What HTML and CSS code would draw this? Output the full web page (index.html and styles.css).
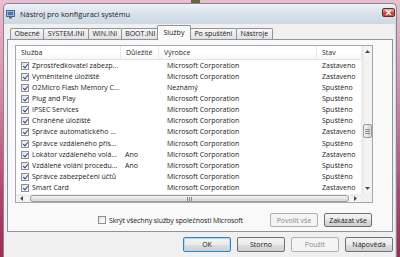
FILE: index.html
```html
<!DOCTYPE html>
<html lang="cs">
<head>
<meta charset="utf-8">
<title>Nástroj pro konfiguraci systému</title>
<link rel="stylesheet" href="styles.css">
</head>
<body>
<div class="desk-blob"></div>
<div class="window">
  <div class="titlebar">
    <svg class="app-icon" viewBox="0 0 9 9" width="9" height="9">
      <rect x="0.5" y="0.5" width="8" height="6" fill="#e4eaf1" stroke="#56677c"/>
      <rect x="1.5" y="1.5" width="6" height="4" fill="#3f78c6"/>
      <rect x="3" y="7" width="3" height="1.5" fill="#56677c"/>
    </svg>
    <span class="title">Nástroj pro konfiguraci systému</span>
    <div class="close">
      <svg viewBox="0 0 13 9" width="13" height="9"><path d="M4.5 2.5 L8.5 6.5 M8.5 2.5 L4.5 6.5" stroke="#ffffff" stroke-width="1.4" stroke-linecap="round"/></svg>
    </div>
  </div>
  <div class="client">
    <div class="tabs">
      <div class="tab">Obecné</div>
      <div class="tab">SYSTEM.INI</div>
      <div class="tab">WIN.INI</div>
      <div class="tab">BOOT.INI</div>
      <div class="tab selected">Služby</div>
      <div class="tab">Po spuštění</div>
      <div class="tab">Nástroje</div>
    </div>
    <div class="panel">
      <div class="listview">
        <div class="lv-content">
          <div class="lv-header">
            <div class="hcol c1">Služba</div>
            <div class="hcol c2">Důležité</div>
            <div class="hcol c3">Výrobce</div>
            <div class="hcol c4">Stav</div>
          </div>
          <div class="lv-row"><div class="cell c1"><span class="cb"></span>Zprostředkovatel zabezp...</div><div class="cell c2"></div><div class="cell c3">Microsoft Corporation</div><div class="cell c4">Zastaveno</div></div>
          <div class="lv-row"><div class="cell c1"><span class="cb"></span>Vyměnitelné úložiště</div><div class="cell c2"></div><div class="cell c3">Microsoft Corporation</div><div class="cell c4">Zastaveno</div></div>
          <div class="lv-row"><div class="cell c1"><span class="cb"></span>O2Micro Flash Memory C...</div><div class="cell c2"></div><div class="cell c3">Neznámý</div><div class="cell c4">Spuštěno</div></div>
          <div class="lv-row"><div class="cell c1"><span class="cb"></span>Plug and Play</div><div class="cell c2"></div><div class="cell c3">Microsoft Corporation</div><div class="cell c4">Spuštěno</div></div>
          <div class="lv-row"><div class="cell c1"><span class="cb"></span>IPSEC Services</div><div class="cell c2"></div><div class="cell c3">Microsoft Corporation</div><div class="cell c4">Spuštěno</div></div>
          <div class="lv-row"><div class="cell c1"><span class="cb"></span>Chráněné úložiště</div><div class="cell c2"></div><div class="cell c3">Microsoft Corporation</div><div class="cell c4">Spuštěno</div></div>
          <div class="lv-row"><div class="cell c1"><span class="cb"></span>Správce automatického ...</div><div class="cell c2"></div><div class="cell c3">Microsoft Corporation</div><div class="cell c4">Zastaveno</div></div>
          <div class="lv-row"><div class="cell c1"><span class="cb"></span>Správce vzdáleného přís...</div><div class="cell c2"></div><div class="cell c3">Microsoft Corporation</div><div class="cell c4">Spuštěno</div></div>
          <div class="lv-row"><div class="cell c1"><span class="cb"></span>Lokátor vzdáleného volá...</div><div class="cell c2">Ano</div><div class="cell c3">Microsoft Corporation</div><div class="cell c4">Zastaveno</div></div>
          <div class="lv-row"><div class="cell c1"><span class="cb"></span>Vzdálené volání procedu...</div><div class="cell c2">Ano</div><div class="cell c3">Microsoft Corporation</div><div class="cell c4">Spuštěno</div></div>
          <div class="lv-row"><div class="cell c1"><span class="cb"></span>Správce zabezpečení účtů</div><div class="cell c2"></div><div class="cell c3">Microsoft Corporation</div><div class="cell c4">Spuštěno</div></div>
          <div class="lv-row"><div class="cell c1"><span class="cb"></span>Smart Card</div><div class="cell c2"></div><div class="cell c3">Microsoft Corporation</div><div class="cell c4">Zastaveno</div></div>
        </div>
        <div class="vscroll">
          <div class="sb-btn">
            <svg viewBox="0 0 5 3" width="5" height="3"><polygon points="2.5,0 5,3 0,3" fill="#4a4a4a"/></svg>
          </div>
          <div class="v-track">
            <div class="v-thumb"><span class="grip-h"></span></div>
          </div>
          <div class="sb-btn">
            <svg viewBox="0 0 5 3" width="5" height="3"><polygon points="0,0 5,0 2.5,3" fill="#4a4a4a"/></svg>
          </div>
        </div>
        <div class="hscroll">
          <div class="sb-btn h">
            <svg viewBox="0 0 3 5" width="3" height="5"><polygon points="3,0 3,5 0,2.5" fill="#4a4a4a"/></svg>
          </div>
          <div class="h-thumb"><span class="grip-v"></span></div>
          <div class="sb-btn h">
            <svg viewBox="0 0 3 5" width="3" height="5"><polygon points="0,0 3,2.5 0,5" fill="#4a4a4a"/></svg>
          </div>
        </div>
        <div class="corner"></div>
      </div>
      <div class="panel-actions">
        <label class="hide-ms"><span class="box"></span>Skrýt všechny služby společnosti Microsoft</label>
        <button class="btn" disabled>Povolit vše</button>
        <button class="btn">Zakázat vše</button>
      </div>
    </div>
    <div class="dialog-buttons">
      <button class="btn big default">OK</button>
      <button class="btn big">Storno</button>
      <button class="btn big" disabled>Použít</button>
      <button class="btn big">Nápověda</button>
    </div>
  </div>
</div>
</body>
</html>
```

FILE: styles.css
```css
* { box-sizing: border-box; }
html, body { margin: 0; padding: 0; }
body {
  width: 400px;
  height: 257px;
  overflow: hidden;
  position: relative;
  background: linear-gradient(180deg, #e9c0cd 0%, #d88aa4 35%, #b7446a 75%, #a3294e 100%);
  font-family: "Open Sans", "Noto Sans", sans-serif;
  font-size: 7px;
  color: #1a1a1a;
}
.desk-blob {
  position: absolute;
  left: 191px;
  top: 0;
  width: 9px;
  height: 3px;
  background: #6b6434;
}
.window {
  margin: 3px 0 0 3px;
  width: 394px;
  height: 258px;
  border: 1px solid #7a8a9c;
  border-bottom: none;
  border-radius: 5px 5px 0 0;
  background: linear-gradient(180deg, #edf2f7 0%, #d9e3ec 9px, #cdd8e3 20px, #cfd9e3 100%);
  display: flex;
  flex-direction: column;
}
.titlebar {
  height: 20px;
  flex: none;
  display: flex;
  align-items: center;
  padding: 0 1px 0 2px;
}
.app-icon { flex: none; margin-right: 5px; }
.title {
  flex: 1;
  font-size: 7.4px;
  color: #202020;
}
.close {
  flex: none;
  align-self: flex-start;
  margin-top: 4px;
  width: 13px;
  height: 9px;
  border: 1px solid #6e2a22;
  border-radius: 2px;
  background: linear-gradient(180deg, #e9a99c 0%, #d66b58 45%, #c23f2a 55%, #c9573f 100%);
  display: flex;
}
.close svg { margin: -1px; }

.client {
  flex: 1;
  margin-right: 1px;
  background: #f0f0f0;
  padding: 1px 2px 0 3px;
  display: flex;
  flex-direction: column;
}
.tabs {
  height: 14px;
  display: flex;
  align-items: flex-end;
  padding-left: 3px;
}
.tab {
  height: 11px;
  padding: 0 3.5px;
  border: 1px solid #8e929a;
  border-bottom: none;
  margin-right: -1px;
  border-radius: 2px 2px 0 0;
  background: linear-gradient(180deg, #f7f7f7 0%, #ececec 50%, #e1e1e1 100%);
  line-height: 10px;
  white-space: nowrap;
}
.tab.selected {
  height: 15px;
  margin: 0 -1px -1px -2px;
  padding: 0 5.5px;
  background: #fbfbfb;
  line-height: 13px;
  position: relative;
  z-index: 1;
}
.panel {
  border: 1px solid #8e929a;
  background: #f9f9f9;
  padding: 5px 19px 4px 7px;
  display: flex;
  flex-direction: column;
}
.listview {
  width: 358px;
  height: 158px;
  border: 1px solid #a3a7ae;
  background: #ffffff;
  display: grid;
  grid-template-columns: 345px 11px;
  grid-template-rows: 148px 8px;
}
.lv-content {
  overflow: hidden;
}
.lv-header {
  display: flex;
  height: 14px;
  border-bottom: 1px solid #e2e4e8;
  background: linear-gradient(180deg, #ffffff 0%, #ffffff 50%, #f6f7f8 100%);
}
.hcol {
  flex: none;
  padding-left: 5px;
  line-height: 13px;
  border-right: 1px solid #e4e6ea;
  white-space: nowrap;
  color: #2a2a2a;
}
.c1 { width: 105px; }
.c2 { width: 38px; }
.c3 { width: 158px; }
.c4 { width: 44px; border-right: none; }
.lv-row {
  display: flex;
  height: 11.15px;
  align-items: center;
}
.cell {
  flex: none;
  padding-left: 6px;
  white-space: nowrap;
  overflow: hidden;
  display: flex;
  align-items: center;
  line-height: 8px;
  height: 8px;
}
.cell.c1 { padding-left: 5px; }
.cell.c2 { padding-left: 4px; }
.cell.c3 { padding-left: 8px; }
.cell.c4 { padding-left: 5px; }
.cb, .hide-ms .box {
  flex: none;
  width: 8px;
  height: 8px;
  border: 1px solid #8f8f8f;
  background: linear-gradient(135deg, #dcdcdc 0%, #f6f6f6 60%, #ffffff 100%);
  margin-right: 3px;
  position: relative;
}
.cb::after {
  content: "";
  position: absolute;
  left: 2px;
  top: 0px;
  width: 2px;
  height: 4px;
  border: solid #24479b;
  border-width: 0 1.3px 1.3px 0;
  transform: rotate(40deg);
}
.vscroll {
  display: flex;
  flex-direction: column;
  background: linear-gradient(90deg, #e9e9e9 0%, #f5f5f5 40%, #f2f2f2 100%);
  border-left: 1px solid #ececec;
}
.sb-btn {
  flex: none;
  height: 11px;
  display: flex;
  align-items: center;
  justify-content: center;
}
.sb-btn.h { height: auto; width: 11px; }
.v-track {
  flex: 1;
  display: flex;
  flex-direction: column;
  padding-top: 67px;
  align-items: center;
}
.v-thumb {
  width: 9px;
  height: 14px;
  border: 1px solid #9b9b9b;
  border-radius: 2px;
  background: linear-gradient(90deg, #f4f4f4 0%, #e6e6e6 50%, #d6d6d6 51%, #dedede 100%);
  display: flex;
  align-items: center;
  justify-content: center;
}
.grip-h {
  width: 5px;
  height: 5px;
  background: repeating-linear-gradient(180deg, #8a8a8a 0 1px, transparent 1px 2px);
}
.hscroll {
  display: flex;
  align-items: stretch;
  background: linear-gradient(180deg, #e9e9e9 0%, #f5f5f5 40%, #f2f2f2 100%);
  border-top: 1px solid #ececec;
}
.h-thumb {
  flex: 1;
  margin: 0 1px 0 3px;
  border: 1px solid #9b9b9b;
  border-radius: 3px;
  background: linear-gradient(180deg, #f4f4f4 0%, #e6e6e6 50%, #d6d6d6 51%, #dedede 100%);
  display: flex;
  align-items: center;
  justify-content: center;
}
.grip-v {
  width: 5px;
  height: 4px;
  background: repeating-linear-gradient(90deg, #8a8a8a 0 1px, transparent 1px 2px);
}
.corner { background: #f0f0f0; }

.panel-actions {
  margin-top: 10px;
  height: 14px;
  display: flex;
  justify-content: flex-end;
  align-items: center;
  padding-right: 1px;
}
.hide-ms {
  display: flex;
  align-items: center;
  margin-right: 21px;
  white-space: nowrap;
  letter-spacing: -0.1px;
}
.hide-ms .box { margin-right: 3px; }
.btn {
  font-family: inherit;
  font-size: 7px;
  color: #1a1a1a;
  width: 48px;
  height: 14px;
  padding: 0;
  border: 1px solid #707070;
  border-radius: 2px;
  background: linear-gradient(180deg, #f3f3f3 0%, #ececec 50%, #dedede 51%, #d0d0d0 100%);
  margin-left: 6px;
}
.btn[disabled] {
  border-color: #adb2b5;
  background: #f4f4f4;
  color: #8a8a8a;
}
.btn.default {
  border-color: #3c7fb1;
  box-shadow: inset 0 0 0 1px #a9dcf6;
}
.dialog-buttons {
  margin-top: 5px;
  display: flex;
  justify-content: flex-end;
}
.btn.big { height: 15px; }
```
